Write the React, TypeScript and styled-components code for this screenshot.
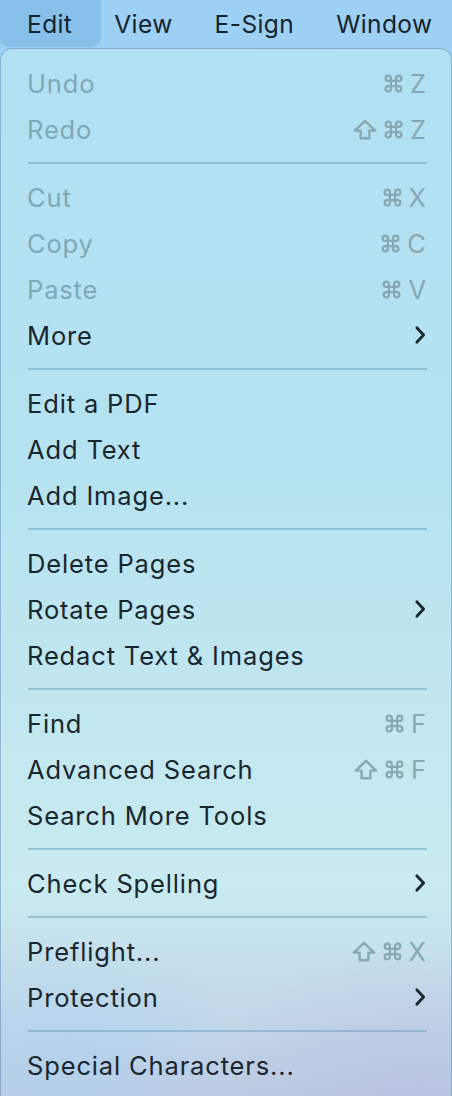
import { createGlobalStyle, styled } from "styled-components"

const GlobalStyle = createGlobalStyle`
    html, body {
        margin: 0;
        padding: 0;
        background: #9dd0f5;
    }
    body {
        font-family: Inter, "Noto Sans", "Liberation Sans", sans-serif;
        -webkit-font-smoothing: antialiased;
    }
`

const Page = styled.div`
    width: 452px;
    height: 1096px;
    overflow: hidden;
    display: flex;
    flex-direction: column;
    background: #9dd0f5;
`

const MenuBar = styled.div`
    height: 47px;
    flex-shrink: 0;
    display: flex;
    align-items: stretch;
    background: #9dd0f5;
`

const BarItem = styled.div<{ $active?: boolean }>`
    display: flex;
    align-items: center;
    padding: ${p => p.$active ? "0 29px 0 27px" : "0 21px"};
    margin-right: ${p => p.$active ? "-8px" : "0"};
    border-radius: 0 0 9px 9px;
    background: ${p => p.$active ? "#87c0ea" : "transparent"};
    color: #16232c;
    font-size: 24.5px;
    letter-spacing: 0.4px;
    white-space: nowrap;
`

const Panel = styled.div`
    flex: 1;
    margin-top: 1px;
    padding-top: 11px;
    border: 1px solid rgba(80, 130, 170, 0.45);
    border-bottom: none;
    border-radius: 12px 12px 0 0;
    background:
        radial-gradient(ellipse 260px 180px at 60px 1010px, rgba(170, 210, 240, 0.55), transparent 70%),
        radial-gradient(ellipse 300px 220px at 420px 1060px, rgba(185, 195, 225, 0.8), transparent 75%),
        linear-gradient(180deg, #b1e0f2 0%, #b6e3f1 40%, #c3e8f0 68%, #c9eaf0 80%, #c3d8ea 92%, #bdcbe2 100%);
    display: flex;
    flex-direction: column;
`

const Row = styled.div<{ $disabled?: boolean }>`
    height: 46px;
    padding: 0 25px 0 26px;
    display: flex;
    align-items: center;
    justify-content: space-between;
    font-size: 25.5px;
    letter-spacing: 0.85px;
    color: ${p => p.$disabled ? "#7ea8b7" : "#1a262e"};
    white-space: nowrap;
`

const Shortcut = styled.span`
    display: flex;
    align-items: center;
    gap: 6px;
    color: #86a8b3;
    font-size: 25.5px;
    letter-spacing: 0;

    svg {
        display: block;
    }
`

const Separator = styled.div`
    height: 22px;
    display: flex;
    align-items: center;
    padding: 0 24px 0 27px;

    &::after {
        content: "";
        flex: 1;
        height: 2px;
        background: rgba(110, 165, 185, 0.55);
    }
`

const ShiftIcon = () => (
    <svg width="24" height="21" viewBox="0 0 24 21">
        <path d="M12 1.8 L22.2 11.6 H16.4 V19.2 H7.6 V11.6 H1.8 Z" fill="none" stroke="#86a8b3" strokeWidth="2.4" strokeLinejoin="round" />
    </svg>
)

const CommandIcon = () => (
    <svg width="21" height="21" viewBox="0 0 24 24">
        <path d="M15 6v12a3 3 0 1 0 3-3H6a3 3 0 1 0 3 3V6a3 3 0 1 0-3 3h12a3 3 0 1 0-3-3" fill="none" stroke="#86a8b3" strokeWidth="2.5" strokeLinecap="round" strokeLinejoin="round" />
    </svg>
)

const Chevron = () => (
    <svg width="12" height="20" viewBox="0 0 12 20">
        <path d="M2.8 2.8 L9.6 10 L2.8 17.2" fill="none" stroke="#1a262e" strokeWidth="2.8" strokeLinecap="round" strokeLinejoin="round" />
    </svg>
)

type Item = {
    label: string
    disabled?: boolean
    shift?: boolean
    key?: string
    sub?: boolean
} | "sep"

const items: Item[] = [
    { label: "Undo", disabled: true, key: "Z" },
    { label: "Redo", disabled: true, shift: true, key: "Z" },
    "sep",
    { label: "Cut", disabled: true, key: "X" },
    { label: "Copy", disabled: true, key: "C" },
    { label: "Paste", disabled: true, key: "V" },
    { label: "More", sub: true },
    "sep",
    { label: "Edit a PDF" },
    { label: "Add Text" },
    { label: "Add Image..." },
    "sep",
    { label: "Delete Pages" },
    { label: "Rotate Pages", sub: true },
    { label: "Redact Text & Images" },
    "sep",
    { label: "Find", key: "F" },
    { label: "Advanced Search", shift: true, key: "F" },
    { label: "Search More Tools" },
    "sep",
    { label: "Check Spelling", sub: true },
    "sep",
    { label: "Preflight...", shift: true, key: "X" },
    { label: "Protection", sub: true },
    "sep",
    { label: "Special Characters..." },
]

export default function App() {
    return (
        <Page>
            <GlobalStyle />
            <MenuBar>
                <BarItem $active>Edit</BarItem>
                <BarItem>View</BarItem>
                <BarItem>E-Sign</BarItem>
                <BarItem>Window</BarItem>
            </MenuBar>

            <Panel>
                {items.map((item, i) => {
                    if (item === "sep") return <Separator key={i} />
                    return (
                        <Row key={i} $disabled={item.disabled}>
                            <span>{item.label}</span>
                            {item.key && (
                                <Shortcut>
                                    {item.shift && <ShiftIcon />}
                                    <CommandIcon />
                                    <span>{item.key}</span>
                                </Shortcut>
                            )}
                            {item.sub && <Chevron />}
                        </Row>
                    )
                })}
            </Panel>
        </Page>
    )
}
